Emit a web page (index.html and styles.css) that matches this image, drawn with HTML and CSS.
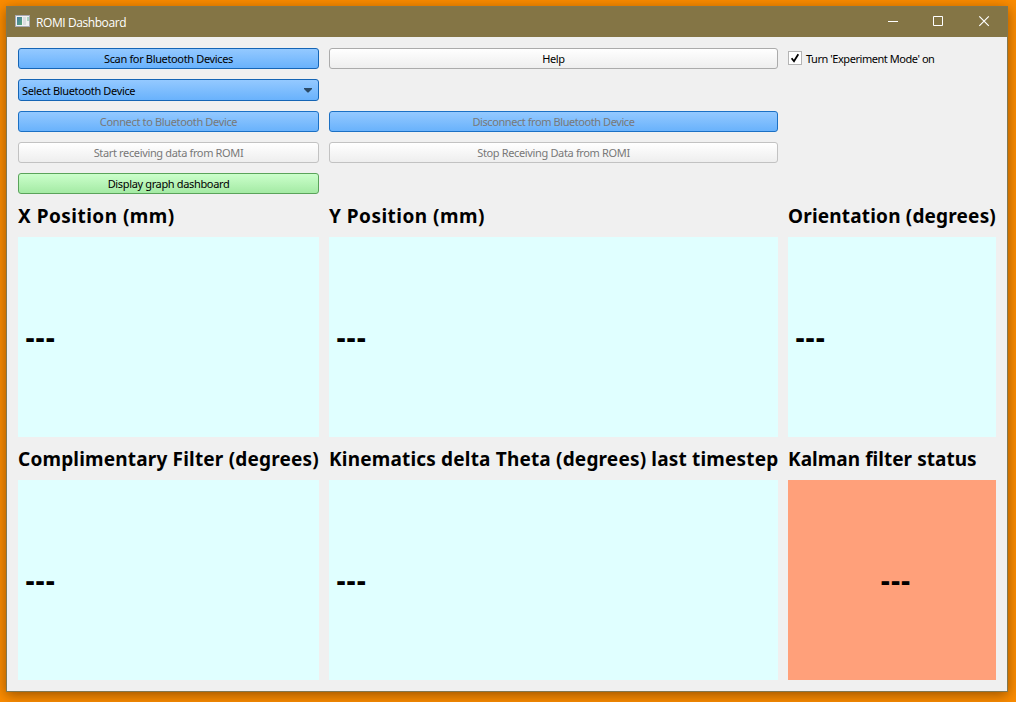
FILE: index.html
```html
<!DOCTYPE html>
<html lang="en">
<head>
<meta charset="utf-8">
<title>ROMI Dashboard</title>
<link rel="stylesheet" href="styles.css">
</head>
<body>
<div class="window">
  <header class="titlebar">
    <svg class="app-icon" width="15" height="12" viewBox="0 0 15 12">
      <defs><linearGradient id="pane" x1="0" y1="0" x2="1" y2="1"><stop offset="0" stop-color="#4579a0"/><stop offset="1" stop-color="#5aa878"/></linearGradient></defs>
      <rect width="15" height="12" fill="#a9a9b2"/>
      <rect x="1" y="1" width="13" height="10" fill="#f1f1f1"/>
      <rect x="2" y="2" width="5" height="8" fill="url(#pane)"/>
      <rect x="8" y="2" width="3" height="8" fill="#dcdde0"/>
      <rect x="12" y="2" width="2" height="4" fill="#a9d3c0"/>
    </svg>
    <h1 class="title">ROMI Dashboard</h1>
    <div class="controls">
      <svg width="46" height="30" viewBox="0 0 46 30"><path d="M18 14.5h10"/></svg>
      <svg width="46" height="30" viewBox="0 0 46 30"><path d="M17.500 9.500h9v9h-9z"/></svg>
      <svg width="46" height="30" viewBox="0 0 46 30"><path d="M17.300 9.300l9.500 9.500M26.800 9.300l-9.500 9.500" stroke-width="1.200"/></svg>
    </div>
  </header>
  <main class="grid">
    <button class="btn blue">Scan for Bluetooth Devices</button>
    <button class="btn">Help</button>
    <label class="check">
      <svg width="14" height="14" viewBox="0 0 14 14"><rect x=".5" y=".5" width="13" height="13" fill="#fff" stroke="#b4b4b4"/><path d="M3.600 7.200L6 10.200L10.300 3.200" fill="none" stroke="#000" stroke-width="1.800"/></svg>
      <span>Turn 'Experiment Mode' on</span>
    </label>

    <div class="btn blue combo first"><span>Select Bluetooth Device</span>
      <svg width="8" height="5" viewBox="0 0 8 5"><path d="M0 0h8v1L4.500 4.500h-1L0 1z" fill="#2b4a66"/></svg>
    </div>

    <button class="btn blue off first">Connect to Bluetooth Device</button>
    <button class="btn blue off tight">Disconnect from Bluetooth Device</button>

    <button class="btn off first">Start receiving data from ROMI</button>
    <button class="btn off">Stop Receiving Data from ROMI</button>

    <button class="btn green first">Display graph dashboard</button>

    <h2 class="first wide">X Position (mm)</h2>
    <h2 class="wide">Y Position (mm)</h2>
    <h2>Orientation (degrees)</h2>
    <div class="value">---</div>
    <div class="value">---</div>
    <div class="value">---</div>
    <h2>Complimentary Filter (degrees)</h2>
    <h2>Kinematics delta Theta (degrees) last timestep</h2>
    <h2 class="narrow">Kalman filter status</h2>
    <div class="value">---</div>
    <div class="value">---</div>
    <div class="value status">---</div>
  </main>
</div>
</body>
</html>
```
FILE: styles.css
```css
* { box-sizing: border-box; }
body {
  margin: 0;
  height: 702px;
  padding: 6px 8px 10px 6px;
  overflow: hidden;
  background: #fb8c00;
  font-family: "Noto Sans", sans-serif;
  font-size: 11px;
  line-height: 15px;
  letter-spacing: -.35px;
  color: #000;
}
.window {
  width: 1002px;
  height: 686px;
  border: 1px solid #817750;
  background: #f0f0f0;
  box-shadow: 0 3px 12px rgba(60, 30, 0, .5);
}
.titlebar {
  display: flex;
  align-items: center;
  height: 30px;
  padding-left: 8px;
  background: #847545;
  color: #fff;
}
.app-icon { margin-bottom: 2px; }
.title {
  margin: 0 0 0 6px;
  padding-top: 1px;
  font: 400 12px/16px "Open Sans", "Noto Sans", sans-serif;
  letter-spacing: -.42px;
}
.controls { display: flex; margin-left: auto; }
.controls svg { display: block; fill: none; stroke: #fff; }
.controls svg:last-child { margin-right: -1px; }
.grid {
  display: grid;
  grid-template-columns: 301px 449px 208px;
  grid-template-rows: 21px 22px 21px 21px 21px 23px 200px 23px 200px;
  gap: 10px;
  padding: 11px;
}
.first { grid-column: 1; }
.btn {
  display: flex;
  align-items: center;
  justify-content: center;
  margin: 0;
  padding: 0;
  border: 1px solid #ababab;
  border-radius: 3px;
  background: linear-gradient(#fff, #eee);
  font: inherit;
  letter-spacing: inherit;
  color: #000;
  white-space: nowrap;
}
.blue { background: linear-gradient(#94c9ff, #69b2fc); border-color: #1565b5; }
.green { background: linear-gradient(#cbffcb, #a4eaa4); border-color: #5aa35a; }
.off { border-color: #c2c2c2; color: #787878; }
.blue.off { border-color: #1b70c4; }
.tight { letter-spacing: -.43px; }
.combo { justify-content: space-between; padding: 1px 6px 0 3px; }
.check {
  display: flex;
  align-items: center;
  gap: 4px;
  letter-spacing: -.45px;
  white-space: nowrap;
}
.check svg { margin-bottom: 1px; }
h2 {
  margin: 0;
  padding-top: 1px;
  font-size: 19px;
  line-height: 23px;
  font-weight: 700;
  letter-spacing: .18px;
  white-space: nowrap;
}
.wide { letter-spacing: .48px; }
.narrow { letter-spacing: .04px; }
.value {
  display: flex;
  align-items: center;
  padding: 3px 0 0 7px;
  background: #e0ffff;
  font: 700 27px "DejaVu Sans Condensed", "DejaVu Sans", sans-serif;
  font-stretch: condensed;
  letter-spacing: 0;
}
.status { justify-content: center; background: #ffa07a; }
```
